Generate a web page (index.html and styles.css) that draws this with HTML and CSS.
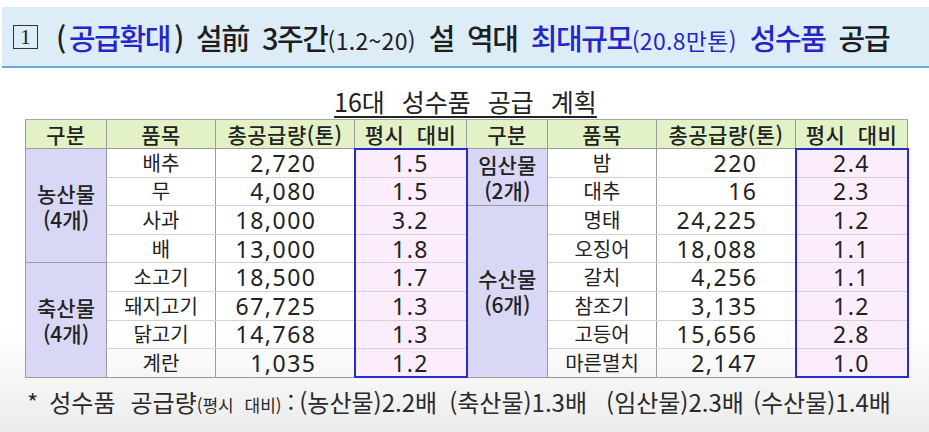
FILE: index.html
```html
<!DOCTYPE html>
<html lang="ko">
<head>
<meta charset="utf-8">
<title>16대 성수품 공급 계획</title>
<link rel="stylesheet" href="styles.css">
</head>
<body>
<div class="band">
  <div class="title">
    <span class="numbox">1</span>
    <span class="seg"><span class="par">(</span><span class="blue">공급확대</span><span class="par">)</span></span>
    <span class="seg">설前</span>
    <span class="seg">3주간<span class="sm">(1.2~20)</span></span>
    <span class="seg">설</span>
    <span class="seg">역대</span>
    <span class="seg blue">최대규모<span class="sm">(20.8만톤)</span></span>
    <span class="seg blue">성수품</span>
    <span class="seg">공급</span>
  </div>
</div>

<div class="caption"><span class="cap-text">16대 성수품 공급 계획</span></div>

<table class="plan">
  <colgroup>
    <col class="c-grp"><col class="c-item"><col class="c-amt"><col class="c-ratio">
    <col class="c-grp"><col class="c-item"><col class="c-amt"><col class="c-ratio">
  </colgroup>
  <thead>
    <tr class="head">
      <th>구분</th><th>품목</th><th>총공급량(톤)</th><th class="hr">평시 대비</th>
      <th>구분</th><th>품목</th><th>총공급량(톤)</th><th class="hr">평시 대비</th>
    </tr>
  </thead>
  <tbody>
    <tr>
      <td class="grp" rowspan="4">농산물<br>(4개)</td>
      <td class="item">배추</td><td class="amt">2,720</td><td class="ratio first">1.5</td>
      <td class="grp" rowspan="2">임산물<br>(2개)</td>
      <td class="item">밤</td><td class="amt">220</td><td class="ratio first">2.4</td>
    </tr>
    <tr>
      <td class="item">무</td><td class="amt">4,080</td><td class="ratio">1.5</td>
      <td class="item">대추</td><td class="amt">16</td><td class="ratio">2.3</td>
    </tr>
    <tr>
      <td class="item">사과</td><td class="amt">18,000</td><td class="ratio">3.2</td>
      <td class="grp" rowspan="6">수산물<br>(6개)</td>
      <td class="item">명태</td><td class="amt">24,225</td><td class="ratio">1.2</td>
    </tr>
    <tr>
      <td class="item">배</td><td class="amt">13,000</td><td class="ratio">1.8</td>
      <td class="item">오징어</td><td class="amt">18,088</td><td class="ratio">1.1</td>
    </tr>
    <tr>
      <td class="grp" rowspan="4">축산물<br>(4개)</td>
      <td class="item">소고기</td><td class="amt">18,500</td><td class="ratio">1.7</td>
      <td class="item">갈치</td><td class="amt">4,256</td><td class="ratio">1.1</td>
    </tr>
    <tr>
      <td class="item">돼지고기</td><td class="amt">67,725</td><td class="ratio">1.3</td>
      <td class="item">참조기</td><td class="amt">3,135</td><td class="ratio">1.2</td>
    </tr>
    <tr>
      <td class="item">닭고기</td><td class="amt">14,768</td><td class="ratio">1.3</td>
      <td class="item">고등어</td><td class="amt">15,656</td><td class="ratio">2.8</td>
    </tr>
    <tr class="last">
      <td class="item">계란</td><td class="amt">1,035</td><td class="ratio end">1.2</td>
      <td class="item">마른멸치</td><td class="amt">2,147</td><td class="ratio end">1.0</td>
    </tr>
  </tbody>
</table>

<div class="note">
  <span>*</span>
  <span class="n-gap1">성수품</span>
  <span class="n-gap2">공급량<span class="note-sm">(평시 대비)</span></span>
  <span class="n-colon">:</span>
  <span class="n-item">(농산물)2.2배</span>
  <span class="n-item g14">(축산물)1.3배</span>
  <span class="n-item g25">(임산물)2.3배</span>
  <span class="n-item g16">(수산물)1.4배</span>
</div>
</body>
</html>
```

FILE: styles.css
```css
html, body {
  margin: 0;
  padding: 0;
}
body {
  width: 929px;
  height: 432px;
  overflow: hidden;
  background: linear-gradient(to bottom, #ffffff 0, #ffffff 330px, #ececec 432px);
  font-family: "Noto Sans CJK KR", "Noto Sans", sans-serif;
  color: #222;
}

/* title band */
.band {
  margin-top: 7px;
  margin-left: 2px;
  height: 59px;
  background: #dcedf8;
  border-bottom: 2px solid #62a9dc;
  display: flex;
  align-items: center;
}
.title {
  display: flex;
  align-items: center;
  gap: 13px;
  padding-left: 11px;
  font-size: 29px;
  font-weight: 500;
  letter-spacing: -1.4px;
  color: #1e1e1e;
  white-space: nowrap;
}
.numbox {
  width: 23px;
  height: 22px;
  border: 1.5px solid #333;
  font-family: "Liberation Serif", serif;
  font-size: 21px;
  font-weight: 400;
  letter-spacing: 0;
  line-height: 22px;
  text-align: center;
  margin-right: 5px;
}
.seg { display: inline-block; }
.par { margin: 0 4px; }
.par:first-child { margin-left: 0; }
.par:last-child { margin-right: 0; }
.blue { color: #2626c8; }
.sm {
  font-size: 23px;
  font-weight: 400;
  letter-spacing: 0.3px;
}

/* caption */
.caption {
  margin-top: 18px;
  height: 30px;
  line-height: 30px;
  text-align: center;
  padding-left: 2px;
}
.cap-text {
  font-size: 25px;
  font-weight: 400;
  word-spacing: 10px;
  letter-spacing: 0;
  text-decoration: underline;
  text-decoration-thickness: 1.5px;
  text-underline-offset: 4px;
  color: #222;
}

/* table */
.plan {
  margin-top: 3px;
  margin-left: 25px;
  width: 881px;
  table-layout: fixed;
  border-collapse: collapse;
  font-size: 20px;
}
.c-grp { width: 81px; }
.c-item { width: 109px; }
.c-amt { width: 139px; }
.c-ratio { width: 112px; }
.plan th, .plan td {
  padding: 0;
  text-align: center;
  line-height: 24px;
  border: 1px solid #9c9c9c;
  border-top-color: #d2d2d2;
  border-bottom-color: #d2d2d2;
  white-space: nowrap;
}
.head { height: 29px; }
.plan th {
  background: #e3f2c6;
  font-size: 21px;
  font-weight: 500;
  border-top-color: #a8a8a8;
  border-bottom-color: #9c9c9c;
  letter-spacing: 0.5px;
}
.hr { word-spacing: 6px; }
.plan tbody tr { height: 28.6px; }
.plan td.grp {
  background: #d8d8f6;
  font-weight: 500;
  font-size: 21px;
  line-height: 26px;
  border-top-color: #9c9c9c;
  border-bottom-color: #9c9c9c;
}
.plan td.item { font-size: 20px; }
.plan td.amt {
  text-align: right;
  padding-right: 37px;
  font-family: "Noto Sans", sans-serif;
  font-size: 23px;
  letter-spacing: 1.5px;
}
.plan td.ratio {
  background: #fbedfb;
  font-family: "Noto Sans", sans-serif;
  font-size: 23px;
  letter-spacing: 1.5px;
  border-left: 2px solid #2a2ad2;
  border-right: 2px solid #2a2ad2;
}
.plan td.ratio.first { border-top: 2px solid #2a2ad2; }
.plan td.ratio.end { border-bottom: 2px solid #2a2ad2; }
.plan tr.last td { border-bottom-color: #9c9c9c; }

/* footnote */
.note {
  display: flex;
  align-items: baseline;
  margin: 9px 0 0 27px;
  height: 30px;
  line-height: 30px;
  font-size: 24px;
  color: #2a2a2a;
  white-space: nowrap;
}
.n-gap1 { margin-left: 11px; }
.n-gap2 { margin-left: 15px; }
.n-colon { margin: 0 5px 0 6px; }
.g14 { margin-left: 12px; }
.g25 { margin-left: 19px; }
.g16 { margin-left: 9px; }
.note-sm {
  font-size: 17px;
  word-spacing: 6px;
}
```
